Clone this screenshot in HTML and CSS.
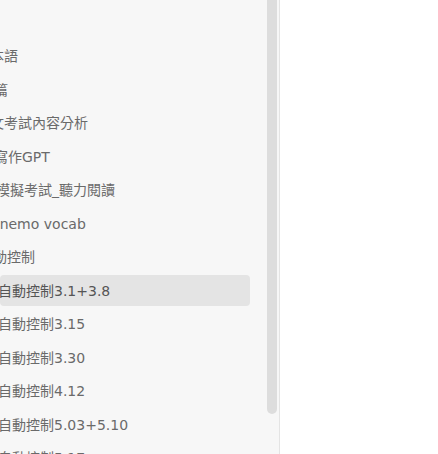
FILE: index.html
```html
<!DOCTYPE html>
<html lang="zh-Hant">
<head>
<meta charset="utf-8">
<link rel="stylesheet" href="styles.css">
</head>
<body>
<div class="app">
  <aside class="sidebar">
    <ul class="tree">
      <li class="row lv-a">日本語</li>
      <li class="row lv-b">篇</li>
      <li class="row lv-a">英文考試內容分析</li>
      <li class="row lv-b">寫作GPT</li>
      <li class="row lv-c">模擬考試_聽力閱讀</li>
      <li class="row lv-d">mnemo vocab</li>
      <li class="row lv-e">自動控制</li>
      <li class="row lv-f active">自動控制3.1+3.8</li>
      <li class="row lv-f">自動控制3.15</li>
      <li class="row lv-f">自動控制3.30</li>
      <li class="row lv-f">自動控制4.12</li>
      <li class="row lv-f">自動控制5.03+5.10</li>
      <li class="row lv-f">自動控制5.17</li>
    </ul>
    <div class="scroll-thumb"></div>
  </aside>
  <main class="content"></main>
</div>
</body>
</html>
```
FILE: styles.css
```css
html, body {
  margin: 0;
  padding: 0;
  height: 100%;
  background: #ffffff;
}
.app {
  display: flex;
  height: 454px;
  overflow: hidden;
}
.sidebar {
  position: relative;
  width: 279px;
  flex: 0 0 279px;
  background: #f7f7f7;
  border-right: 1px solid #e4e4e4;
  overflow: hidden;
}
.tree {
  list-style: none;
  margin: 0;
  padding: 40px 0 0 0;
  display: flex;
  flex-direction: column;
  gap: 2.5px;
  width: 250px;
}
.row {
  height: 31px;
  line-height: 32px;
  font-family: "DejaVu Sans", "Noto Sans CJK TC", sans-serif;
  font-size: 14px;
  color: #6a6a6a;
  white-space: nowrap;
  border-radius: 4px;
}
.lv-a { text-indent: -24px; }
.lv-b { text-indent: -6px; }
.lv-c { text-indent: -4px; }
.lv-d { text-indent: -14px; }
.lv-e { text-indent: -21px; }
.lv-f { text-indent: -2px; }
.row.active {
  background: #e4e4e4;
  color: #555555;
}
.scroll-thumb {
  position: absolute;
  top: 0;
  left: 267px;
  width: 10px;
  height: 414px;
  background: #dddddd;
  border-radius: 0 0 5px 5px;
}
.content {
  flex: 1;
  background: #ffffff;
}
```
